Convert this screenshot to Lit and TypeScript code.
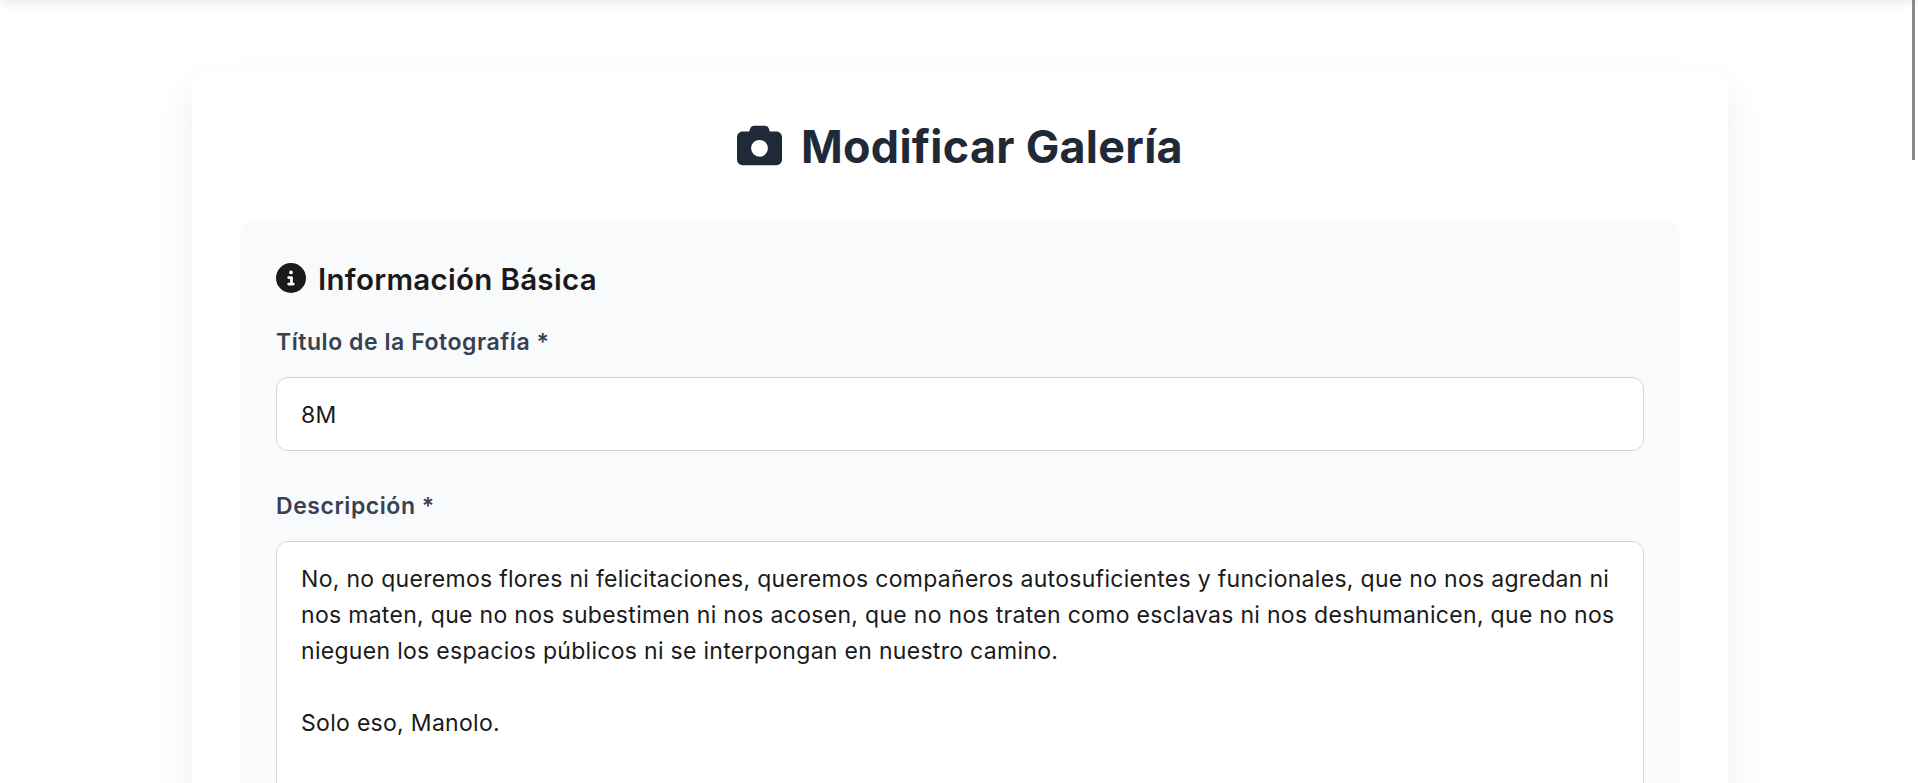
import { LitElement, html, css } from "lit";
import { customElement } from "lit/decorators.js";

const DESC = `No, no queremos flores ni felicitaciones, queremos compañeros autosuficientes y funcionales, que no nos agredan ni
nos maten, que no nos subestimen ni nos acosen, que no nos traten como esclavas ni nos deshumanicen, que no nos
nieguen los espacios públicos ni se interpongan en nuestro camino.

Solo eso, Manolo.`;

@customElement("app-root")
export class AppRoot extends LitElement {
  static styles = css`
    :host { display: block; height: 783px; overflow: hidden; position: relative; background: #fff;
      font-family: Inter, "Liberation Sans", sans-serif; }
    * { box-sizing: border-box; }
    .nav-shadow { position: absolute; left: 0; right: 0; top: -10px; height: 10px; background: #fff;
      box-shadow: 0 2px 12px rgba(0,0,0,.1); }
    .thumb { position: absolute; right: 3px; top: 0; width: 3px; height: 160px; background: #8a8a8a; }
    .page { padding: 70px 0 0 2px; display: flex; justify-content: center; }
    .card { width: 1536px; height: 1400px; flex: none; background: #fff; border-radius: 16px; padding: 48px;
      box-shadow: 0 20px 40px rgba(0,0,0,.08); }
    h1 { margin: 0 0 45px; height: 58px; display: flex; align-items: center; justify-content: center; gap: 19px;
      font-size: 44.8px; font-weight: 700; color: #1f2937; line-height: 58px; letter-spacing: .3px; }
    h1 svg { width: 45px; height: 45px; fill: #1f2937; margin-bottom: 4px; }
    .section { background: #f9fafb; border-radius: 12px; padding: 36px; }
    h2 { margin: 0 0 23px; display: flex; align-items: center; gap: 12px; font-size: 29.5px; font-weight: 600;
      color: #1a1a1a; line-height: 44px; letter-spacing: .3px; }
    h2 svg { width: 30px; height: 30px; fill: #1a1a1a; margin-bottom: 2px; }
    label { display: block; font-size: 23px; font-weight: 600; color: #374151; line-height: 36px; margin-bottom: 17px; letter-spacing: .55px; }
    .field { margin-bottom: 37px; }
    input, textarea { display: block; width: 100%; background: #fff; border: 1px solid #d1d5db; border-radius: 12px;
      padding: 0 24px; font: inherit; font-size: 23px; color: #1a1a1a; line-height: 36px; outline: none; letter-spacing: .3px; }
    input { height: 74px; padding-top: 2px; }
    textarea { height: 400px; padding-top: 19px; resize: none; overflow: hidden; white-space: pre; }
  `;

  render() {
    return html`
      <div class="page">
        <main class="card">
          <h1>
            <svg viewBox="0 0 512 512"><path d="M149.1 64.8L138.7 96H64C28.7 96 0 124.7 0 160V416c0 35.3 28.7 64 64 64H448c35.3 0 64-28.7 64-64V160c0-35.3-28.7-64-64-64H373.3L362.9 64.8C356.4 45.2 338.1 32 317.4 32H194.6c-20.7 0-39 13.2-45.5 32.8zM256 192a96 96 0 1 1 0 192 96 96 0 1 1 0-192z"/></svg>
            Modificar Galería
          </h1>
          <section class="section">
            <h2>
              <svg viewBox="0 0 512 512"><path d="M256 512A256 256 0 1 0 256 0a256 256 0 1 0 0 512zM216 336h24V272H216c-13.3 0-24-10.7-24-24s10.7-24 24-24h48c13.3 0 24 10.7 24 24v88h8c13.3 0 24 10.7 24 24s-10.7 24-24 24H216c-13.3 0-24-10.7-24-24s10.7-24 24-24zm40-208a32 32 0 1 1 0 64 32 32 0 1 1 0-64z"/></svg>
              Información Básica
            </h2>
            <div class="field">
              <label for="t">Título de la Fotografía *</label>
              <input id="t" .value=${"8M"} />
            </div>
            <div class="field">
              <label for="d">Descripción *</label>
              <textarea id="d" .value=${DESC}></textarea>
            </div>
          </section>
        </main>
      </div>
      <div class="nav-shadow"></div>
      <div class="thumb"></div>
    `;
  }
}
